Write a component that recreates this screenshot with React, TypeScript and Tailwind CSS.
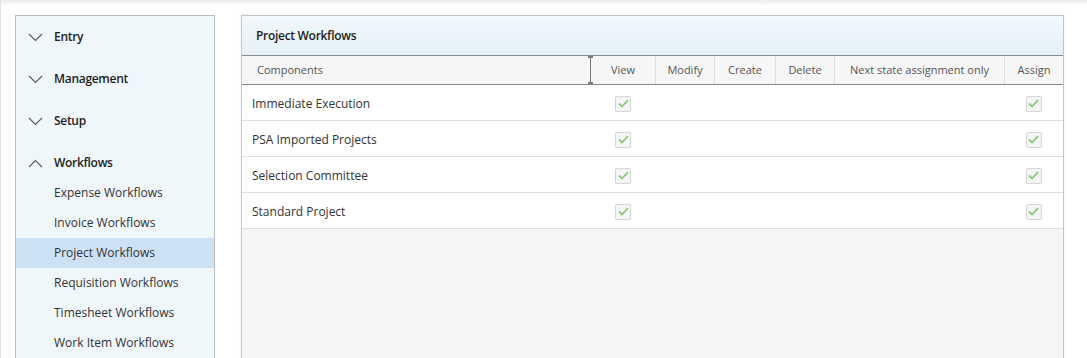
const menu = [
  { label: 'Entry', open: false },
  { label: 'Management', open: false },
  { label: 'Setup', open: false },
  { label: 'Workflows', open: true },
];

const subItems = [
  'Expense Workflows',
  'Invoice Workflows',
  'Project Workflows',
  'Requisition Workflows',
  'Timesheet Workflows',
  'Work Item Workflows',
];

const columns = ['View', 'Modify', 'Create', 'Delete', 'Next state assignment only', 'Assign'];

const rows = ['Immediate Execution', 'PSA Imported Projects', 'Selection Committee', 'Standard Project'];

function Chevron({ up }: { up?: boolean }) {
  return (
    <svg width="15" height="9" viewBox="0 0 15 9" className="shrink-0">
      <polyline
        points={up ? '1,8 7.5,1.5 14,8' : '1,1 7.5,7.5 14,1'}
        fill="none"
        stroke="#5a5a5a"
        strokeWidth="1.1"
      />
    </svg>
  );
}

function Check() {
  return (
    <div className="w-[16px] h-[16px] border border-[#d6d6d6] bg-[#f5f5f5] rounded-[2px] flex items-center justify-center">
      <svg width="11" height="9" viewBox="0 0 11 9">
        <polyline points="1,4.5 4,7.5 10,1.2" fill="none" stroke="#94c482" strokeWidth="1.8" />
      </svg>
    </div>
  );
}

function Sidebar() {
  return (
    <div className="w-[200px] h-[400px] shrink-0 border border-[#bdbdbd] bg-[#f0f7fb]">
      {menu.map((m) => (
        <div key={m.label} className="h-[42px] flex items-center pl-[12px] gap-[11px] text-[12px] tracking-[-0.3px] font-semibold text-[#1e1e1e]">
          <Chevron up={m.open} />
          <span>{m.label}</span>
        </div>
      ))}
      <div className="-mt-[6px]">
        {subItems.map((s) => (
          <div
            key={s}
            className={`h-[30px] flex items-center pl-[38px] text-[12px] text-[#333] ${s === 'Project Workflows' ? 'bg-[#cde1f5]' : ''}`}
          >
            {s}
          </div>
        ))}
      </div>
    </div>
  );
}

function Panel() {
  const grid = 'grid grid-cols-[349px_64px_59px_61px_59px_170px_59px]';
  return (
    <div className="w-[823px] h-[400px] shrink-0 border border-[#c4c4c4] bg-[#f5f5f5] shadow-[0_-1px_3px_rgba(0,0,0,0.06)] flex flex-col">
      <div className="h-[39px] flex items-center px-[14px] bg-gradient-to-b from-[#f2f8fc] to-[#e4f0f8] text-[12px] tracking-[-0.3px] font-semibold text-[#1e1e1e]">
        Project Workflows
      </div>
      <div className={`${grid} h-[30px] border-y border-[#8a8a8a] bg-[#f6f6f6] text-[11px] text-[#555]`}>
        <div className="relative flex items-center pl-[15px] pt-[1px]">
          Components
          <div className="absolute right-0 top-0 bottom-0 w-[1px] bg-[#7a7a7a]" />
          <div className="absolute -right-[2px] top-0 w-[5px] h-[2px] bg-[#7a7a7a]" />
          <div className="absolute -right-[2px] bottom-0 w-[5px] h-[2px] bg-[#7a7a7a]" />
        </div>
        {columns.map((c, i) => (
          <div
            key={c}
            className={`flex items-center justify-center pt-[1px] ${i > 0 ? 'border-l border-[#dedede]' : ''}`}
          >
            {c}
          </div>
        ))}
      </div>
      <div className="bg-white">
        {rows.map((r) => (
          <div key={r} className={`${grid} h-[36px] border-b border-[#dedede] text-[12px] text-[#333]`}>
            <div className="flex items-center pl-[10px] pt-[2px]">{r}</div>
            <div className="flex items-center justify-center pt-[2px]">
              <Check />
            </div>
            <div />
            <div />
            <div />
            <div />
            <div className="flex items-center justify-center pt-[2px]">
              <Check />
            </div>
          </div>
        ))}
      </div>
    </div>
  );
}

export default function App() {
  return (
    <div
      className="relative w-[1087px] h-[358px] overflow-hidden bg-white border-l border-[#e2e2e2]"
      style={{ fontFamily: '"Open Sans", "Noto Sans", sans-serif' }}
    >
      <div className="absolute inset-x-0 top-0 h-[6px] bg-gradient-to-b from-[#ececec] to-white" />
      <div className="relative flex gap-[26px] pt-[15px] pl-[14px]">
        <Sidebar />
        <Panel />
      </div>
    </div>
  );
}
